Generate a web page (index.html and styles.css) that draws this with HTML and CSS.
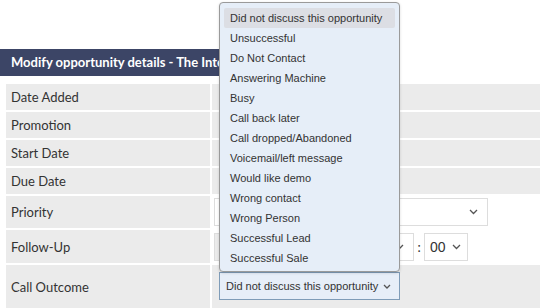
FILE: index.html
```html
<!DOCTYPE html>
<html lang="en">
  <head>
    <meta charset="UTF-8" />
    <meta name="viewport" content="width=device-width, initial-scale=1.0" />
    <title>Modify opportunity details</title>
    <link rel="stylesheet" href="styles.css">
  </head>
  <body>
    <div class="page">
      <div class="modal-title">Modify opportunity details - The Internet</div>

      <div class="details">
        <div class="label">Date Added</div>
        <div class="value"></div>

        <div class="label">Promotion</div>
        <div class="value"></div>

        <div class="label">Start Date</div>
        <div class="value"></div>

        <div class="label">Due Date</div>
        <div class="value"></div>

        <div class="label tall">Priority</div>
        <div class="value plain">
          <div class="select priority">
            <span></span>
            <svg class="chev" width="9" height="6" viewBox="0 0 9 6"><polyline points="1,1 4.5,4.5 8,1" /></svg>
          </div>
        </div>

        <div class="label tall">Follow-Up</div>
        <div class="value plain">
          <div class="date-input"></div>
          <div class="select hours">
            <span></span>
            <svg class="chev" width="9" height="6" viewBox="0 0 9 6"><polyline points="1,1 4.5,4.5 8,1" /></svg>
          </div>
          <span class="colon">:</span>
          <div class="select minutes">
            <span>00</span>
            <svg class="chev" width="9" height="6" viewBox="0 0 9 6"><polyline points="1,1 4.5,4.5 8,1" /></svg>
          </div>
        </div>

        <div class="label outcome">Call Outcome</div>
        <div class="value outcome">
          <div class="select call-outcome">
            <span>Did not discuss this opportunity</span>
            <svg class="chev" width="8" height="5" viewBox="0 0 8 5"><polyline points="1,1 4,4 7,1" /></svg>
          </div>
        </div>
      </div>

      <!-- open dropdown of the call outcome select -->
      <ul class="dropdown">
        <li class="active">Did not discuss this opportunity</li>
        <li>Unsuccessful</li>
        <li>Do Not Contact</li>
        <li>Answering Machine</li>
        <li>Busy</li>
        <li>Call back later</li>
        <li>Call dropped/Abandoned</li>
        <li>Voicemail/left message</li>
        <li>Would like demo</li>
        <li>Wrong contact</li>
        <li>Wrong Person</li>
        <li>Successful Lead</li>
        <li>Successful Sale</li>
      </ul>
    </div>
  </body>
</html>
```
FILE: styles.css
```css
body {
  margin: 0;
  padding: 0;
  font-family: Lato, "Open Sans", sans-serif;
  color: #333;
  background-color: #fff;
  overflow: hidden;
}
.page {
  position: relative;
  padding-top: 49px;
}
.modal-title {
  width: 390px;
  height: 27px;
  line-height: 27px;
  padding-left: 11px;
  box-sizing: border-box;
  background-color: #3c4566;
  color: #fff;
  font-weight: bold;
  font-size: 13px;
  white-space: nowrap;
  overflow: hidden;
}

/* Detail rows */
.details {
  display: grid;
  grid-template-columns: 204px 328px;
  grid-template-rows: 26px 26px 26px 26px 32px 33px 45px;
  gap: 2px;
  margin: 8px 0 0 6px;
}
.label {
  display: flex;
  align-items: center;
  padding-left: 5px;
  font-size: 13px;
  background-color: #ebebeb;
}
.label.outcome {
  align-items: flex-start;
  padding-top: 14px;
}
.value {
  display: flex;
  align-items: center;
  background-color: #ebebeb;
}
.value.plain {
  background-color: #fff;
  padding-left: 2px;
}
.value.outcome {
  align-items: flex-start;
  padding: 7px 0 0 7px;
}

/* Select boxes */
.select {
  display: flex;
  align-items: center;
  justify-content: space-between;
  box-sizing: border-box;
  height: 28px;
  padding: 0 9px 0 6px;
  border: 1px solid #ddd;
  background-color: #fff;
  font-family: "Liberation Sans", Arial, sans-serif;
  font-size: 13px;
}
.chev {
  fill: none;
  stroke: #555;
  stroke-width: 1.3;
}
.priority {
  width: 274px;
}
.date-input {
  width: 150px;
  height: 28px;
  box-sizing: border-box;
  border: 1px solid #ddd;
  background-color: #ebebeb;
}
.hours {
  width: 46px;
  margin-left: 4px;
}
.colon {
  width: 10px;
  text-align: center;
  font-size: 13px;
}
.minutes {
  width: 44px;
  padding: 0 6px 0 5px;
  font-size: 14px;
  color: #333;
}
.call-outcome {
  width: 181px;
  height: 28px;
  padding: 0 8px 0 6px;
  border-color: #7f9cb8;
  background-color: #e7eef8;
  font-size: 11px;
  color: #333;
}

/* Open dropdown list */
.dropdown {
  position: absolute;
  top: 2px;
  left: 219px;
  width: 181px;
  height: 270px;
  box-sizing: border-box;
  margin: 0;
  padding: 5px 4px;
  list-style: none;
  background-color: #e6eef8;
  border: 1px solid #9a9a9a;
  border-radius: 4px;
  box-shadow: 0 1px 3px rgba(0, 0, 0, 0.15);
  font-family: "Liberation Sans", Arial, sans-serif;
  font-size: 11px;
  color: #333;
}
.dropdown li {
  height: 20px;
  line-height: 20px;
  padding-left: 6px;
  white-space: nowrap;
}
.dropdown li.active {
  background-color: #dcdee4;
  border-radius: 2px;
}
```
